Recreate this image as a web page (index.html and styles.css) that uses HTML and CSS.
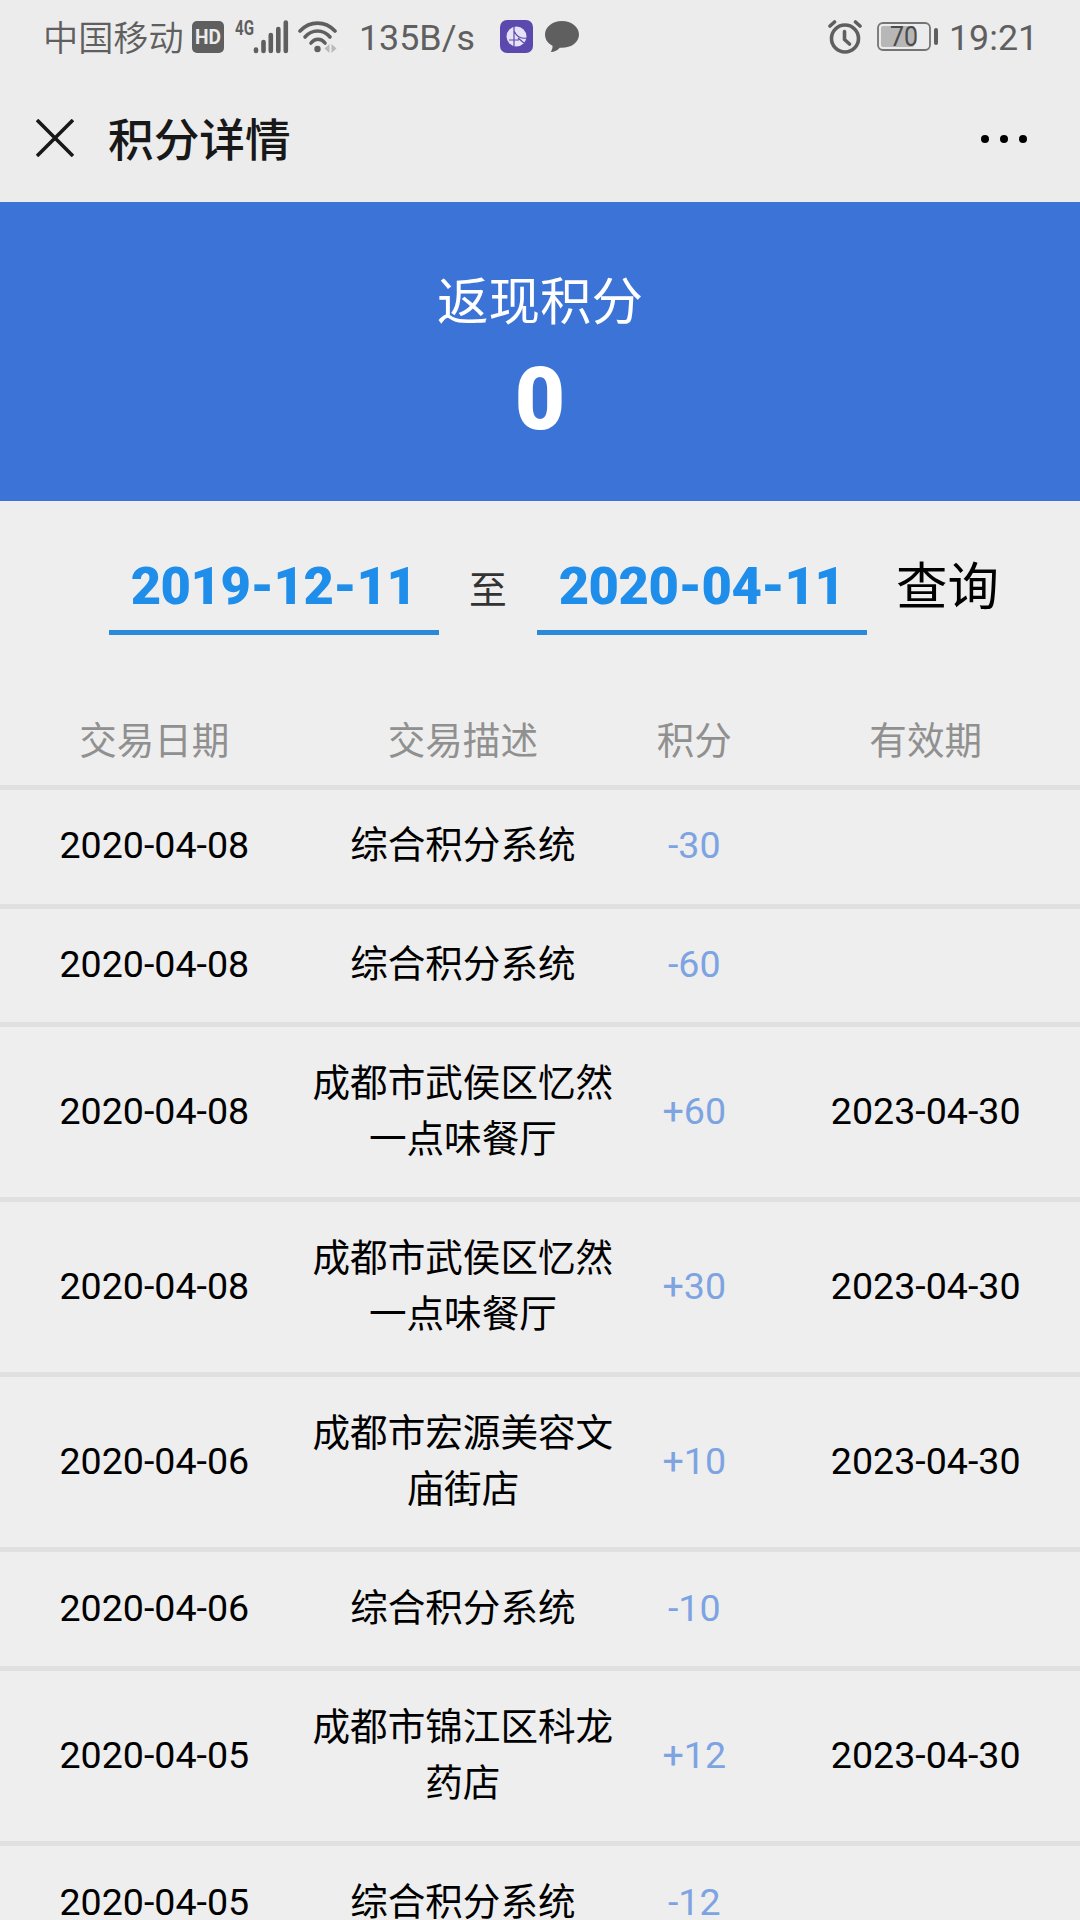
FILE: index.html
```
<!DOCTYPE html>
<html lang="zh-CN">
  <head>
    <meta charset="UTF-8" />
    <meta name="viewport" content="width=device-width, initial-scale=1.0" />
    <title>积分详情</title>
    <link rel="stylesheet" href="styles.css">
  </head>
  <body>
    <div class="status">
      <span class="carrier">中国移动</span>
      <svg class="hd" width="32" height="32" viewBox="0 0 32 32">
        <rect width="32" height="32" rx="5" fill="#5f5f5f" />
        <text x="16" y="23" text-anchor="middle" textLength="26" lengthAdjust="spacingAndGlyphs" font-size="20" font-weight="700" fill="#ececec">HD</text>
      </svg>
      <svg class="signal" width="54" height="42" viewBox="0 -4 54 42">
        <text x="0" y="15" textLength="19" lengthAdjust="spacingAndGlyphs" font-size="20" font-weight="700" fill="#5f5f5f">4G</text>
        <g stroke="#5f5f5f" stroke-width="4.6" stroke-linecap="round">
          <path d="M21 29.5v1.5M28.5 22v9M35.8 15v16M43.3 9v22M50.8 2.5v28.5" />
        </g>
      </svg>
      <svg class="wifi" width="40" height="34" viewBox="0 0 40 34">
        <g fill="none" stroke="#5f5f5f" stroke-width="3.6" stroke-linecap="round">
          <path d="M2 11C12 .5 27 .5 37 11" />
          <path d="M7 17c7-8 18-8 25 0" />
          <path d="M13 23c4-5 10-5 14 0" />
        </g>
        <circle cx="19.5" cy="29" r="3.2" fill="#5f5f5f" />
        <path d="M31.5 24v9l-5-4.500zM33.5 24v9l5-4.500z" fill="#bababa" />
      </svg>
      <span class="speed">135B/s</span>
      <svg class="app" width="34" height="34" viewBox="0 0 34 34">
        <rect width="33" height="33" rx="7" fill="#5b49ad" />
        <circle cx="16.5" cy="16.5" r="10" fill="#e6e2f7" />
        <path d="M14 7v19M9 20h10M14 11c3 6 7 8 12 7M18 18l6 5" fill="none" stroke="#5b49ad" stroke-width="1.2" />
      </svg>
      <svg class="chat" width="34" height="34" viewBox="0 0 34 34">
        <path d="M17 1C7.500 1 0 7 0 14.500c0 5 3 9 7.500 11.300.3 2-.5 4.200-1.800 6.200 4 0 7-1.800 9-4.200C26 28.500 34 22.500 34 14.500 34 7 26.500 1 17 1z" fill="#5f5f5f" />
      </svg>
      <svg class="alarm" width="34" height="34" viewBox="0 0 34 34">
        <g fill="none" stroke="#5f5f5f" stroke-width="3.6" stroke-linecap="round" stroke-linejoin="round">
          <circle cx="17" cy="18.5" r="13.5" />
          <path d="M16.5 11.5v8l5 4.500" />
          <path d="M2 6l4.500-4M27.500 2l4.500 4" />
        </g>
      </svg>
      <svg class="battery" width="62" height="30" viewBox="0 0 62 30">
        <rect x="1" y="1" width="52" height="27" rx="5" fill="none" stroke="#747474" stroke-width="1.8" />
        <rect x="4" y="4" width="33" height="21" rx="2" fill="#b7b7b7" />
        <rect x="57" y="6" width="4" height="17" rx="2" fill="#5f5f5f" />
        <text x="27" y="24" text-anchor="middle" font-size="27" textLength="28" lengthAdjust="spacingAndGlyphs" fill="#4b4b4b">70</text>
      </svg>
      <span class="time">19:21</span>
    </div>

    <div class="nav">
      <svg width="38" height="38" viewBox="0 0 38 38">
        <path d="M1 1l36 36M37 1L1 37" stroke="#181818" stroke-width="3.6" />
      </svg>
      <h1 class="nav-title">积分详情</h1>
      <svg class="more" width="46" height="8" viewBox="0 0 46 8">
        <circle cx="4" cy="4" r="4" />
        <circle cx="23" cy="4" r="4" />
        <circle cx="42" cy="4" r="4" />
      </svg>
    </div>

    <div class="banner">
      <div class="banner-label">返现积分</div>
      <div class="banner-num">0</div>
    </div>

    <div class="search">
      <div class="date">2019-12-11</div>
      <span class="to">至</span>
      <div class="date">2020-04-11</div>
      <div class="query">查询</div>
    </div>

    <div class="list">
      <div class="row head">
        <div class="cell">交易日期</div>
        <div class="cell">交易描述</div>
        <div class="cell point">积分</div>
        <div class="cell">有效期</div>
      </div>
      <div class="row">
        <div class="cell">2020-04-08</div>
        <div class="cell">综合积分系统</div>
        <div class="cell point">-30</div>
        <div class="cell"></div>
      </div>
      <div class="row">
        <div class="cell">2020-04-08</div>
        <div class="cell">综合积分系统</div>
        <div class="cell point">-60</div>
        <div class="cell"></div>
      </div>
      <div class="row">
        <div class="cell">2020-04-08</div>
        <div class="cell">成都市武侯区忆然一点味餐厅</div>
        <div class="cell point">+60</div>
        <div class="cell">2023-04-30</div>
      </div>
      <div class="row">
        <div class="cell">2020-04-08</div>
        <div class="cell">成都市武侯区忆然一点味餐厅</div>
        <div class="cell point">+30</div>
        <div class="cell">2023-04-30</div>
      </div>
      <div class="row">
        <div class="cell">2020-04-06</div>
        <div class="cell">成都市宏源美容文庙街店</div>
        <div class="cell point">+10</div>
        <div class="cell">2023-04-30</div>
      </div>
      <div class="row">
        <div class="cell">2020-04-06</div>
        <div class="cell">综合积分系统</div>
        <div class="cell point">-10</div>
        <div class="cell"></div>
      </div>
      <div class="row">
        <div class="cell">2020-04-05</div>
        <div class="cell">成都市锦江区科龙药店</div>
        <div class="cell point">+12</div>
        <div class="cell">2023-04-30</div>
      </div>
      <div class="row">
        <div class="cell">2020-04-05</div>
        <div class="cell">综合积分系统</div>
        <div class="cell point">-12</div>
        <div class="cell"></div>
      </div>
    </div>
  </body>
</html>
```
FILE: styles.css
```
* {
  box-sizing: border-box;
}
body {
  margin: 0;
  height: 1920px;
  overflow: hidden;
  background: #eee;
  color: #000;
  font-family: Roboto, "Noto Sans CJK SC", sans-serif;
}
svg {
  display: block;
  flex-shrink: 0;
}

/* 状态栏 */
.status {
  display: flex;
  align-items: center;
  height: 74px;
  padding: 0 46px 0 43px;
  background: #ececec;
  color: #5f5f5f;
  font-size: 36px;
  line-height: 72px;
  white-space: nowrap;
}
.carrier {
  width: 149px;
  padding-top: 4px;
  font-size: 35.2px;
  font-weight: 350;
}
.signal {
  margin-left: 11px;
}
.wifi {
  margin-left: 9px;
}
.speed {
  margin-left: 21px;
  width: 119px;
  padding-top: 2px;
  font-size: 35.8px;
}
.app {
  margin-left: 22px;
}
.chat {
  margin-left: 11px;
}
.alarm {
  margin-left: auto;
}
.battery {
  margin-left: 15px;
}
.time {
  margin-left: 10px;
  width: 85px;
  padding-top: 2px;
  font-size: 35.8px;
}

/* 导航 */
.nav {
  display: flex;
  align-items: center;
  height: 128px;
  padding: 0 53px 0 36px;
  background: #ececec;
}
.nav-title {
  flex: 1;
  margin: 0 0 2px 34px;
  color: #181818;
  font-size: 45.7px;
  font-weight: 500;
}
.more {
  margin-top: 1px;
}

.banner {
  height: 299px;
  padding-top: 63px;
  background: #3c73d6;
  color: #fff;
  text-align: center;
}
.banner-label {
  font-size: 51.5px;
  line-height: 76px;
}
.banner-num {
  font-size: 87px;
  font-weight: 900;
  line-height: 116px;
}

/* 日期查询 */
.search {
  display: flex;
  height: 194px;
  padding: 40px 0 0 109px;
}
.date {
  width: 330px;
  height: 94px;
  padding-right: 1px;
  border-bottom: 5px solid #2c88d9;
  color: #1f8eea;
  font-size: 52.5px;
  font-weight: 900;
  letter-spacing: -0.5px;
  line-height: 90px;
  text-align: center;
}
.to {
  width: 98px;
  color: #333;
  font-size: 37.8px;
  line-height: 98px;
  text-align: center;
}
.query {
  margin-left: 29px;
  font-size: 51.5px;
  line-height: 93px;
}

/* 积分明细 */
.row {
  display: flex;
  align-items: center;
  padding: 27.4px 0 30.1px;
  border-bottom: 5px solid #e0e0e0;
  font-size: 37.6px;
  line-height: 56.25px;
}
.head {
  height: 95px;
  padding: 2px 0 0;
  color: #909090;
}
.cell {
  flex: 2;
  text-align: center;
}
.point {
  flex: 1;
  color: #7da3e2;
}
.head .point {
  color: #909090;
}
```
